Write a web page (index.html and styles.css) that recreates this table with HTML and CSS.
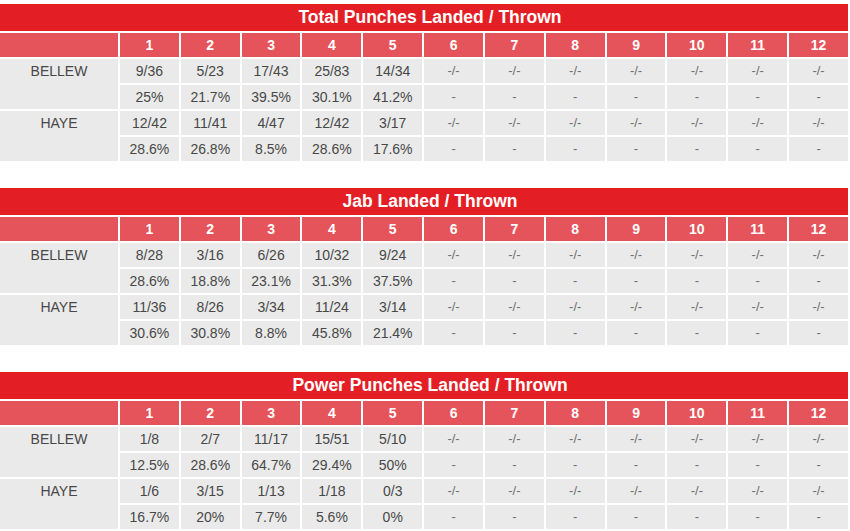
FILE: index.html
```html
<!DOCTYPE html>
<html>
<head>
<meta charset="utf-8">
<link rel="stylesheet" href="styles.css">
</head>
<body>
<div class="page">
  <section class="block">
    <div class="title">Total Punches Landed / Thrown</div>
    <table class="stats">
      <tr class="head"><th class="lab"></th><th>1</th><th>2</th><th>3</th><th>4</th><th>5</th><th>6</th><th>7</th><th>8</th><th>9</th><th>10</th><th>11</th><th>12</th></tr>
      <tr><td class="name" rowspan="2"><span>BELLEW</span></td><td>9/36</td><td>5/23</td><td>17/43</td><td>25/83</td><td>14/34</td><td class="e">-/-</td><td class="e">-/-</td><td class="e">-/-</td><td class="e">-/-</td><td class="e">-/-</td><td class="e">-/-</td><td class="e">-/-</td></tr>
      <tr><td>25%</td><td>21.7%</td><td>39.5%</td><td>30.1%</td><td>41.2%</td><td class="e">-</td><td class="e">-</td><td class="e">-</td><td class="e">-</td><td class="e">-</td><td class="e">-</td><td class="e">-</td></tr>
      <tr><td class="name" rowspan="2"><span>HAYE</span></td><td>12/42</td><td>11/41</td><td>4/47</td><td>12/42</td><td>3/17</td><td class="e">-/-</td><td class="e">-/-</td><td class="e">-/-</td><td class="e">-/-</td><td class="e">-/-</td><td class="e">-/-</td><td class="e">-/-</td></tr>
      <tr><td>28.6%</td><td>26.8%</td><td>8.5%</td><td>28.6%</td><td>17.6%</td><td class="e">-</td><td class="e">-</td><td class="e">-</td><td class="e">-</td><td class="e">-</td><td class="e">-</td><td class="e">-</td></tr>
    </table>
  </section>
  <section class="block">
    <div class="title">Jab Landed / Thrown</div>
    <table class="stats">
      <tr class="head"><th class="lab"></th><th>1</th><th>2</th><th>3</th><th>4</th><th>5</th><th>6</th><th>7</th><th>8</th><th>9</th><th>10</th><th>11</th><th>12</th></tr>
      <tr><td class="name" rowspan="2"><span>BELLEW</span></td><td>8/28</td><td>3/16</td><td>6/26</td><td>10/32</td><td>9/24</td><td class="e">-/-</td><td class="e">-/-</td><td class="e">-/-</td><td class="e">-/-</td><td class="e">-/-</td><td class="e">-/-</td><td class="e">-/-</td></tr>
      <tr><td>28.6%</td><td>18.8%</td><td>23.1%</td><td>31.3%</td><td>37.5%</td><td class="e">-</td><td class="e">-</td><td class="e">-</td><td class="e">-</td><td class="e">-</td><td class="e">-</td><td class="e">-</td></tr>
      <tr><td class="name" rowspan="2"><span>HAYE</span></td><td>11/36</td><td>8/26</td><td>3/34</td><td>11/24</td><td>3/14</td><td class="e">-/-</td><td class="e">-/-</td><td class="e">-/-</td><td class="e">-/-</td><td class="e">-/-</td><td class="e">-/-</td><td class="e">-/-</td></tr>
      <tr><td>30.6%</td><td>30.8%</td><td>8.8%</td><td>45.8%</td><td>21.4%</td><td class="e">-</td><td class="e">-</td><td class="e">-</td><td class="e">-</td><td class="e">-</td><td class="e">-</td><td class="e">-</td></tr>
    </table>
  </section>
  <section class="block">
    <div class="title">Power Punches Landed / Thrown</div>
    <table class="stats">
      <tr class="head"><th class="lab"></th><th>1</th><th>2</th><th>3</th><th>4</th><th>5</th><th>6</th><th>7</th><th>8</th><th>9</th><th>10</th><th>11</th><th>12</th></tr>
      <tr><td class="name" rowspan="2"><span>BELLEW</span></td><td>1/8</td><td>2/7</td><td>11/17</td><td>15/51</td><td>5/10</td><td class="e">-/-</td><td class="e">-/-</td><td class="e">-/-</td><td class="e">-/-</td><td class="e">-/-</td><td class="e">-/-</td><td class="e">-/-</td></tr>
      <tr><td>12.5%</td><td>28.6%</td><td>64.7%</td><td>29.4%</td><td>50%</td><td class="e">-</td><td class="e">-</td><td class="e">-</td><td class="e">-</td><td class="e">-</td><td class="e">-</td><td class="e">-</td></tr>
      <tr><td class="name" rowspan="2"><span>HAYE</span></td><td>1/6</td><td>3/15</td><td>1/13</td><td>1/18</td><td>0/3</td><td class="e">-/-</td><td class="e">-/-</td><td class="e">-/-</td><td class="e">-/-</td><td class="e">-/-</td><td class="e">-/-</td><td class="e">-/-</td></tr>
      <tr><td>16.7%</td><td>20%</td><td>7.7%</td><td>5.6%</td><td>0%</td><td class="e">-</td><td class="e">-</td><td class="e">-</td><td class="e">-</td><td class="e">-</td><td class="e">-</td><td class="e">-</td></tr>
    </table>
  </section>
</div>
</body>
</html>
```
FILE: styles.css
```css
html, body {
  margin: 0;
  padding: 0;
  background: #ffffff;
}
body {
  font-family: "Liberation Sans", Arial, sans-serif;
  color: #444444;
  width: 850px;
  overflow: hidden;
}
.page {
  padding-top: 4px;
  width: 848px;
}
.block {
  margin-bottom: 25px;
}
.title {
  height: 27px;
  line-height: 27px;
  background: #e31f25;
  color: #ffffff;
  font-weight: bold;
  font-size: 17.5px;
  text-align: center;
  padding-left: 12px;
}
.stats {
  border-collapse: separate;
  border-spacing: 2px;
  margin: 0 -2px;
  width: 852px;
  table-layout: fixed;
}
.stats th, .stats td {
  padding: 0;
  text-align: center;
  height: 24px;
  line-height: 24px;
}
.stats th {
  background: #e5545a;
  color: #ffffff;
  font-weight: bold;
  font-size: 14px;
}
.stats th.lab {
  width: 118px;
}
.stats td {
  background: #eaeaea;
  font-size: 14px;
  color: #484848;
}
.stats td.e {
  color: #707070;
  font-size: 13px;
}
.stats td.name {
  vertical-align: top;
}
.stats td.name span {
  display: block;
  height: 24px;
  line-height: 24px;
}
```
